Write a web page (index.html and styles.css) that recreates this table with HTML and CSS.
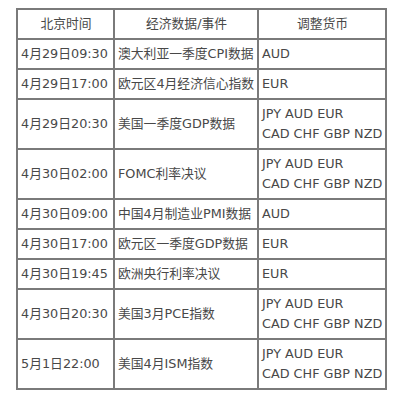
FILE: index.html
```html
<!DOCTYPE html>
<html lang="zh-CN">
<head>
<meta charset="utf-8">
<title>经济数据日程</title>
<link rel="stylesheet" href="styles.css">
</head>
<body>
<div class="wrap">
<table class="sched">
  <colgroup>
    <col class="c-time">
    <col class="c-event">
    <col class="c-cur">
  </colgroup>
  <thead>
    <tr><th>北京时间</th><th>经济数据/事件</th><th>调整货币</th></tr>
  </thead>
  <tbody>
    <tr><td>4月29日09:30</td><td>澳大利亚一季度CPI数据</td><td>AUD</td></tr>
    <tr><td>4月29日17:00</td><td>欧元区4月经济信心指数</td><td>EUR</td></tr>
    <tr><td>4月29日20:30</td><td>美国一季度GDP数据</td><td>JPY AUD EUR<br>CAD CHF GBP NZD</td></tr>
    <tr><td>4月30日02:00</td><td>FOMC利率决议</td><td>JPY AUD EUR<br>CAD CHF GBP NZD</td></tr>
    <tr><td>4月30日09:00</td><td>中国4月制造业PMI数据</td><td>AUD</td></tr>
    <tr><td>4月30日17:00</td><td>欧元区一季度GDP数据</td><td>EUR</td></tr>
    <tr><td>4月30日19:45</td><td>欧洲央行利率决议</td><td>EUR</td></tr>
    <tr><td>4月30日20:30</td><td>美国3月PCE指数</td><td>JPY AUD EUR<br>CAD CHF GBP NZD</td></tr>
    <tr><td>5月1日22:00</td><td>美国4月ISM指数</td><td>JPY AUD EUR<br>CAD CHF GBP NZD</td></tr>
  </tbody>
</table>
</div>
</body>
</html>
```
FILE: styles.css
```css
html, body {
  margin: 0;
  background: #ffffff;
}
.wrap {
  padding: 8px 0 0 16px;
}
.sched {
  border-collapse: collapse;
  table-layout: fixed;
  width: 369px;
  font-family: "DejaVu Sans", "Noto Sans CJK SC", sans-serif;
  font-size: 12.8px;
  line-height: 20px;
  color: #484848;
}
.c-time { width: 97px; }
.c-event { width: 144px; }
.c-cur { width: 128px; }
.sched th,
.sched td {
  border: 2px solid #7a7a7a;
  padding: 4px 2px 4px 3px;
  vertical-align: middle;
  white-space: nowrap;
  overflow: hidden;
}
.sched th {
  font-weight: normal;
  text-align: center;
}
.sched td {
  text-align: left;
}
```
